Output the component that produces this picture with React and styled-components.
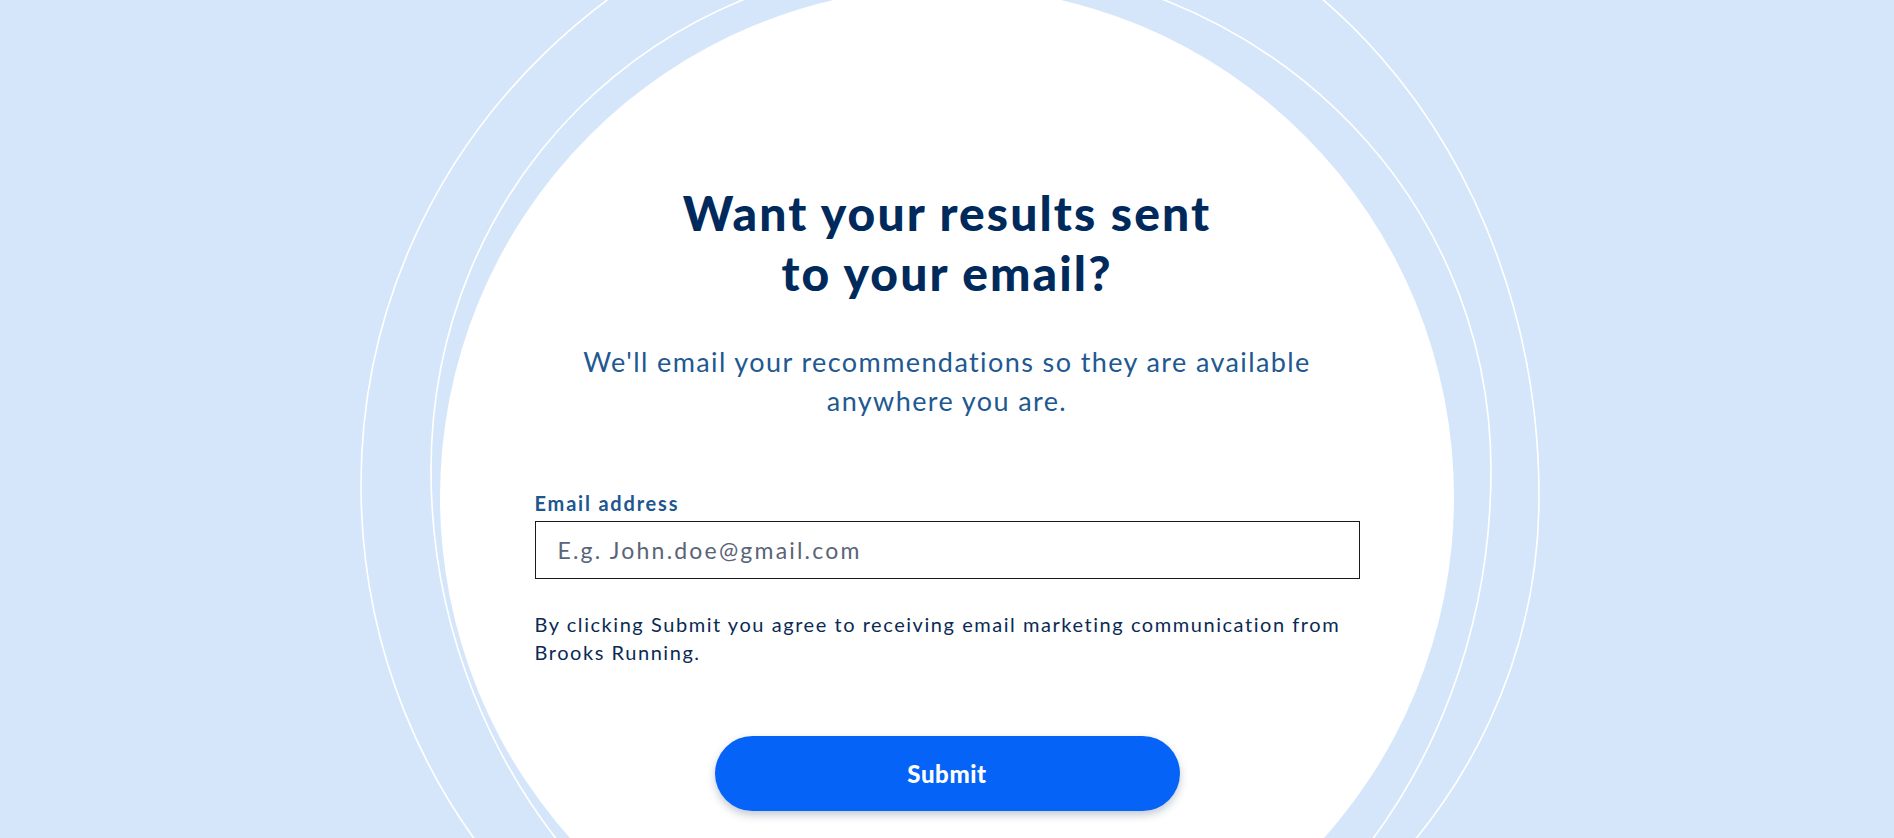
import React from "react";
import styled, { createGlobalStyle } from "styled-components";

const GlobalStyle = createGlobalStyle`
  html, body {
    margin: 0;
    padding: 0;
    width: 100%;
    height: 100%;
  }
  body {
    font-family: "Lato", "Noto Sans", sans-serif;
    background: #d5e6fb;
    overflow: hidden;
  }
  * { box-sizing: border-box; }
`;

const Page = styled.div`
  position: relative;
  width: 100%;
  height: 838px;
  background: #d5e6fb;
  overflow: hidden;
`;

const Backdrop = styled.svg`
  position: absolute;
  inset: 0;
  width: 100%;
  height: 100%;
  pointer-events: none;
`;

const Content = styled.main`
  position: relative;
  display: flex;
  flex-direction: column;
  align-items: center;
  padding-top: 183px;
`;

const Heading = styled.h1`
  margin: 0;
  font-family: "Lato", sans-serif;
  font-weight: 900;
  font-size: 48px;
  line-height: 60px;
  color: #002a5c;
  text-align: center;
  letter-spacing: 2.1px;
`;

const Lead = styled.p`
  margin: 39px 0 0;
  font-family: "Lato", sans-serif;
  font-weight: 400;
  font-size: 27px;
  line-height: 39px;
  color: #215891;
  text-align: center;
  letter-spacing: 1.4px;
`;

const Form = styled.form`
  width: 825px;
  margin-top: 71px;
  display: flex;
  flex-direction: column;
`;

const Label = styled.label`
  font-family: "Lato", sans-serif;
  font-weight: 700;
  font-size: 20px;
  line-height: 24px;
  color: #1d5690;
  letter-spacing: 1.8px;
  margin-bottom: 6px;
`;

const Input = styled.input`
  width: 100%;
  height: 58px;
  border: 1px solid #1a1a1a;
  border-radius: 0;
  padding: 0 22px;
  font-family: "Lato", sans-serif;
  font-size: 23px;
  letter-spacing: 2.2px;
  color: #1a1a1a;
  background: #fff;
  outline: none;
  &::placeholder {
    color: #5a6478;
  }
`;

const Notice = styled.p`
  margin: 31px 0 0;
  font-family: "Lato", sans-serif;
  font-size: 20px;
  line-height: 28px;
  letter-spacing: 1.55px;
  color: #0a2a55;
`;

const SubmitButton = styled.button`
  align-self: center;
  margin-top: 70px;
  width: 465px;
  height: 75px;
  border: none;
  border-radius: 38px;
  background: #0564f7;
  color: #fff;
  font-family: "Lato", sans-serif;
  font-weight: 900;
  font-size: 24px;
  letter-spacing: 0.6px;
  box-shadow: 0 4px 9px rgba(40, 60, 90, 0.28);
  cursor: pointer;
`;

function Rings() {
  return (
    <Backdrop viewBox="0 0 1894 838" preserveAspectRatio="none">
      <path
        d="M361 485 C361 148 640 -125 990 -125 C1300 -125 1539 153 1539 497 C1539 821 1250 1070 915 1070 C609 1070 361 806 361 485 Z"
        fill="none"
        stroke="#ffffff"
        strokeWidth="1.6"
      />
      <path
        d="M431 470 C431 188 650 -40 950 -40 C1258 -40 1491 188 1491 470 C1491 785 1266 1050 965 1050 C675 1050 431 785 431 470 Z"
        fill="none"
        stroke="#ffffff"
        strokeWidth="1.6"
      />
      <ellipse cx="947" cy="497" rx="507" ry="510" fill="#ffffff" />
    </Backdrop>
  );
}

export default function App() {
  return (
    <>
      <GlobalStyle />
      <Page>
        <Rings />
        <Content>
          <Heading>
            Want your results sent
            <br />
            to your email?
          </Heading>
          <Lead>
            We'll email your recommendations so they are available
            <br />
            anywhere you are.
          </Lead>
          <Form onSubmit={(e) => e.preventDefault()}>
            <Label htmlFor="email">Email address</Label>
            <Input id="email" type="email" placeholder="E.g. John.doe@gmail.com" />
            <Notice>
              By clicking Submit you agree to receiving email marketing communication from
              Brooks Running.
            </Notice>
            <SubmitButton type="submit">Submit</SubmitButton>
          </Form>
        </Content>
      </Page>
    </>
  );
}
